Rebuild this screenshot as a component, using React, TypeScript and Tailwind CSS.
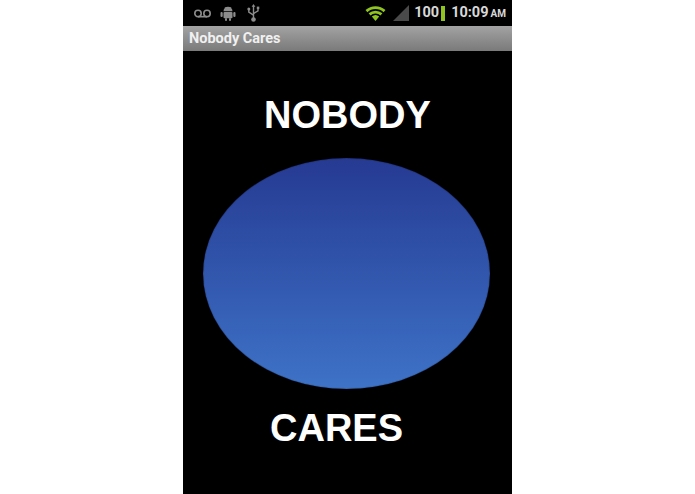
const StatusIcons = () => (
  <div className="flex items-center pl-[11px]">
    <svg width="17" height="9" viewBox="0 0 17 9" fill="none" stroke="#8c8c8c" strokeWidth="1.6">
      <circle cx="4" cy="4.5" r="3.2" />
      <circle cx="13" cy="4.5" r="3.2" />
      <path d="M4 7.7h9" />
    </svg>
    <svg className="ml-[9px]" width="16" height="15" viewBox="0 0 16 15" fill="#8c8c8c">
      <path d="M3.5 5.2a4.5 4.5 0 0 1 9 0z" />
      <path d="M5 1 6.1 2.8M11 1 9.9 2.8" stroke="#8c8c8c" strokeWidth="0.8" />
      <rect x="3.5" y="6" width="9" height="6.2" rx="1" />
      <rect x="0.5" y="6" width="2.2" height="5" rx="1" />
      <rect x="13.3" y="6" width="2.2" height="5" rx="1" />
      <rect x="5" y="12" width="2" height="3" rx="1" />
      <rect x="9" y="12" width="2" height="3" rx="1" />
    </svg>
    <svg className="ml-[11px]" width="13" height="18" viewBox="0 0 13 18" fill="none" stroke="#8c8c8c" strokeWidth="1.4">
      <path d="M6.5 2v13" />
      <path d="M6.5 0 4.6 2.8h3.8z" fill="#8c8c8c" stroke="none" />
      <path d="M1.8 6v2.2l4.7 3M11 5v1.8l-4.5 2.8" />
      <circle cx="1.8" cy="5" r="1.5" fill="#8c8c8c" stroke="none" />
      <rect x="9.8" y="2.6" width="2.5" height="2.5" fill="#8c8c8c" stroke="none" />
      <circle cx="6.5" cy="15.5" r="2.3" fill="#8c8c8c" stroke="none" />
    </svg>
  </div>
);

const NetworkIcons = () => (
  <div className="flex items-center">
    <svg width="21" height="16" viewBox="0 0 21 16">
      <path
        d="M0.5 5a15 15 0 0 1 20 0L18.6 7.2a12 12 0 0 0-16.2 0zM3.6 8.3a10.5 10.5 0 0 1 13.8 0l-1.9 2.1a7.5 7.5 0 0 0-10 0zM6.8 11.6a5.8 5.8 0 0 1 7.4 0L10.5 16z"
        fill="#8fc31f"
      />
    </svg>
    <svg className="ml-[7px]" width="16" height="16" viewBox="0 0 16 16">
      <path d="M16 0v16H0z" fill="#4a4a4a" />
    </svg>
    <span className="ml-[5px] font-['Roboto',sans-serif] text-[14.5px] leading-none font-bold text-[#d8d8d8]">100</span>
    <span className="ml-[2px] h-[15px] w-[4px] bg-[#8fc31f]" />
    <span className="ml-[6px] flex items-baseline font-['Roboto',sans-serif] text-[14.5px] leading-none font-bold text-[#d8d8d8]">
      10:09
      <span className="ml-[2px] text-[10px]">AM</span>
    </span>
  </div>
);

const App = () => {
  return (
    <div className="h-[494px] w-[695px] bg-white font-['Liberation_Sans',Arial,sans-serif]">
      <div className="ml-[183px] flex h-[494px] w-[329px] flex-col bg-black">
        <div className="flex h-[26px] items-center justify-between pr-[6px]">
          <StatusIcons />
          <NetworkIcons />
        </div>
        <div className="flex h-[25px] items-center bg-gradient-to-b from-[#a3a3a3] to-[#7a7a7a] pl-[6px] font-['Roboto',sans-serif] text-[14.5px] font-bold text-[#f0f0f0]">
          Nobody Cares
        </div>
        <div className="flex flex-1 flex-col">
          <div className="mt-[41px] h-[46px] text-center text-[38px] leading-[46px] font-bold text-white">
            NOBODY
          </div>
          <div className="mt-[20px] ml-[20px] h-[231px] w-[287px] rounded-[50%] bg-gradient-to-b from-[#263a92] to-[#3e73c8] shadow-[inset_0_0_1px_#000]" />
          <div className="mt-[16px] ml-[87px] h-[46px] text-[38px] leading-[46px] font-bold text-white">
            CARES
          </div>
        </div>
      </div>
    </div>
  );
};

export default App;
